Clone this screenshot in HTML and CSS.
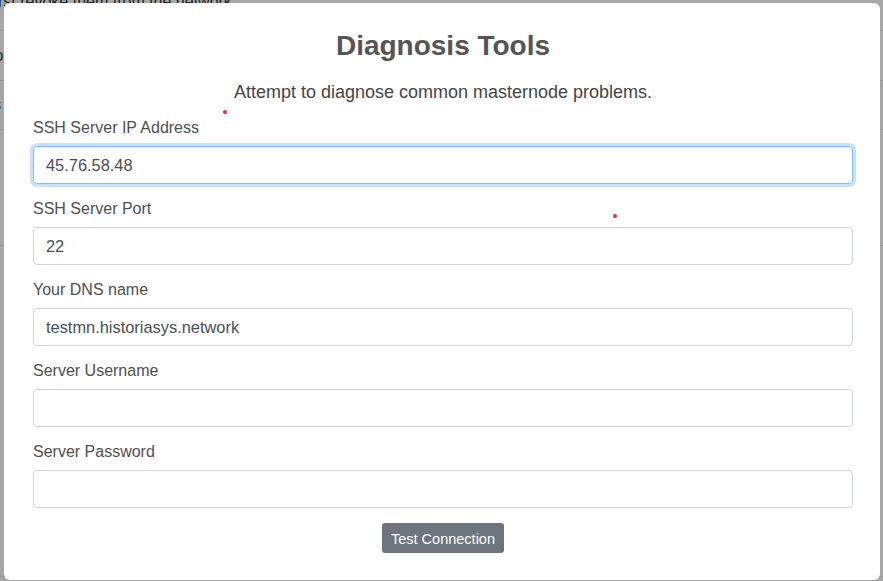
FILE: index.html
```html
<!DOCTYPE html>
<html>
<head>
<meta charset="utf-8">
<link rel="stylesheet" href="styles.css">
</head>
<body>
<div class="page">
  <div class="page-top">rst revoke them from the network</div>
  <div class="row row-a">Collections</div>
  <div class="row row-b">Status</div>
  <div class="row row-c"></div>
  <div class="row row-d"></div>
</div>
<div class="modal">
  <h1 class="title">Diagnosis Tools</h1>
  <p class="subtitle">Attempt to diagnose common masternode problems.</p>
  <form class="form">
    <div class="group">
      <label class="label">SSH Server IP Address</label>
      <div class="input focused">45.76.58.48</div>
    </div>
    <div class="group">
      <label class="label">SSH Server Port</label>
      <div class="input">22</div>
    </div>
    <div class="group">
      <label class="label">Your DNS name</label>
      <div class="input">testmn.historiasys.network</div>
    </div>
    <div class="group">
      <label class="label">Server Username</label>
      <div class="input"></div>
    </div>
    <div class="group">
      <label class="label">Server Password</label>
      <div class="input"></div>
    </div>
    <div class="actions">
      <button type="button" class="btn">Test Connection</button>
    </div>
  </form>
  <span class="dot dot-1"></span>
  <span class="dot dot-2"></span>
</div>
</body>
</html>
```
FILE: styles.css
```css
html, body {
  margin: 0;
  padding: 0;
}
body {
  width: 883px;
  height: 581px;
  overflow: hidden;
  position: relative;
  background: #a6a6a6;
  font-family: "Liberation Sans", Arial, sans-serif;
}
.page {
  display: flex;
  flex-direction: column;
}
.page-top {
  height: 37px;
  margin-top: -7px;
  font-size: 16px;
  line-height: 18px;
  color: #222;
  border-bottom: 1px solid #9a9a9a;
  background: #a7a7a7;
  text-indent: -2px;
}
.row {
  font-size: 16px;
  color: #333;
  border-bottom: 1px solid #999;
  display: flex;
  align-items: center;
  text-indent: -58px;
}
.row-a { height: 49px; background: #a9a9a9; }
.row-b { height: 48px; background: #a5a5a5; text-indent: -44px; }
.row-c { height: 115px; background: #a7a7a7; }
.row-d { height: 330px; background: #a6a6a6; }

.modal {
  position: absolute;
  left: 4px;
  top: 3px;
  width: 876px;
  height: 577px;
  box-sizing: border-box;
  background: #fff;
  border-radius: 6px;
  padding: 0 27px 0 29px;
}
.title {
  margin: 27px 0 0;
  text-align: center;
  font-size: 28px;
  line-height: 32px;
  font-weight: bold;
  color: #555;
}
.subtitle {
  margin: 19px 0 0;
  text-align: center;
  font-size: 18px;
  line-height: 22px;
  color: #444;
}
.form {
  margin-top: 15px;
}
.group {
  margin-bottom: 15px;
}
.label {
  display: block;
  font-size: 16px;
  line-height: 20px;
  color: #4f4f4f;
  margin-bottom: 8px;
}
.input {
  height: 38px;
  box-sizing: border-box;
  border: 1px solid #ced4da;
  border-radius: 4px;
  padding: 0 12px;
  font-size: 16.4px;
  line-height: 36px;
  color: #495057;
}
.input.focused {
  border-color: #80bdff;
  box-shadow: 0 0 0 3px rgba(0, 123, 255, 0.22);
}
.actions {
  display: flex;
  justify-content: center;
  margin-top: 3px;
}
.btn {
  font-family: "Liberation Sans", Arial, sans-serif;
  background: #6c757d;
  color: #fff;
  border: none;
  border-radius: 3px;
  font-size: 14.5px;
  line-height: 18px;
  padding: 7px 9px 5px;
  height: 30px;
}
.dot {
  position: absolute;
  width: 4px;
  height: 4px;
  border-radius: 50%;
  background: #ee2a48;
}
.dot-1 { left: 219px; top: 107px; }
.dot-2 { left: 609px; top: 211px; }
```
